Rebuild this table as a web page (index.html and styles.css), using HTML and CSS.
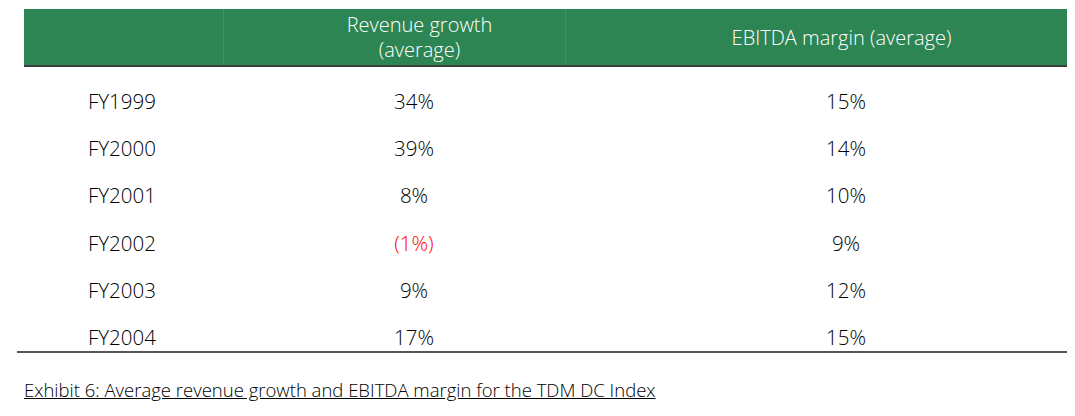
FILE: index.html
```html
<!DOCTYPE html>
<html>
<head>
<meta charset="utf-8">
<link rel="stylesheet" href="styles.css">
</head>
<body>
<div class="exhibit">
  <div class="table">
    <div class="head">
      <div class="hcell c1"></div>
      <div class="hcell c2">Revenue growth<br>(average)</div>
      <div class="hcell c3">EBITDA margin (average)</div>
    </div>
    <div class="body">
      <div class="row"><div class="c1">FY1999</div><div class="c2">34%</div><div class="c3">15%</div></div>
      <div class="row"><div class="c1">FY2000</div><div class="c2">39%</div><div class="c3">14%</div></div>
      <div class="row"><div class="c1">FY2001</div><div class="c2">8%</div><div class="c3">10%</div></div>
      <div class="row"><div class="c1">FY2002</div><div class="c2 neg">(1%)</div><div class="c3">9%</div></div>
      <div class="row"><div class="c1">FY2003</div><div class="c2">9%</div><div class="c3">12%</div></div>
      <div class="row"><div class="c1">FY2004</div><div class="c2">17%</div><div class="c3">15%</div></div>
    </div>
  </div>
  <p class="caption">Exhibit 6: Average revenue growth and EBITDA margin for the TDM DC Index</p>
</div>
</body>
</html>
```

FILE: styles.css
```css
html, body {
  margin: 0;
  padding: 0;
  background: #ffffff;
}
.exhibit {
  padding: 9px 8px 0 17px;
  font-family: "Open Sans", "Liberation Sans", sans-serif;
  font-weight: 300;
  color: #000000;
}
.table {
  width: 1050px;
}
.head {
  margin-left: 7px;
  display: grid;
  grid-template-columns: 199px 342px 502px;
  height: 56px;
  background: #2e8554;
  border-bottom: 2px solid #3a3f3c;
  color: #ffffff;
  font-size: 20px;
  line-height: 25px;
}
.hcell {
  display: flex;
  align-items: center;
  justify-content: center;
  text-align: center;
  border-left: 1px solid #3b9262;
}
.hcell.c1 { border-left: none; }
.head .c2 { padding-left: 50px; }
.head .c3 { padding-left: 50px; }
.body {
  padding-top: 10px;
  border-bottom: 2px solid #555555;
}
.row {
  display: grid;
  grid-template-columns: 206px 342px 502px;
  height: 47.3px;
  align-items: center;
  font-size: 20.5px;
}
.row:last-child { margin-bottom: -10px; }
.row .c1 { padding-left: 71px; }
.row .c2 { text-align: center; padding-left: 40px; }
.row .c3 { text-align: center; padding-left: 60px; }
.neg { color: #ff0000; }
.caption {
  margin: 24px 0 0 7px;
  font-size: 18.5px;
  text-decoration: underline;
}
```
